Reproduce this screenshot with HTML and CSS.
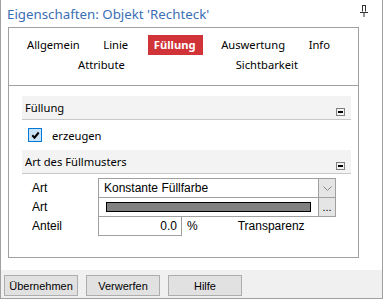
FILE: index.html
```html
<!DOCTYPE html>
<html lang="de">

<head>
  <meta charset="UTF-8">
  <meta name="viewport" content="width=device-width, initial-scale=1.0">
  <title>Eigenschaften</title>
  <link rel="stylesheet" href="styles.css">
</head>

<body>
  <div class="window">
    <div class="titlebar">
      <span class="title">Eigenschaften: Objekt 'Rechteck'</span>
      <svg class="pin" width="8" height="12" viewBox="0 0 8 12">
        <path d="M2 0.5h4M2.5 0.5v6M5.5 0.5v6M0 7.5h8M4 7.5v4.5" stroke="#333" stroke-width="1" fill="none" />
      </svg>
    </div>

    <div class="panel">
      <div class="tabs">
        <div class="tab-row first">
          <span class="tab">Allgemein</span>
          <span class="tab">Linie</span>
          <span class="tab active">Füllung</span>
          <span class="tab">Auswertung</span>
          <span class="tab">Info</span>
        </div>
        <div class="tab-row second">
          <span class="tab">Attribute</span>
          <span class="tab">Sichtbarkeit</span>
        </div>
      </div>

      <div class="content">
        <!-- Füllung -->
        <div class="section-head">
          <span>Füllung</span>
          <span class="collapse"></span>
        </div>
        <div class="check-row">
          <span class="checkbox">
            <svg width="11" height="11" viewBox="0 0 11 11">
              <path d="M2.3 5.3l2.2 2.4 4.2-5.2" stroke="#000" stroke-width="2" fill="none" />
            </svg>
          </span>
          <span>erzeugen</span>
        </div>

        <!-- Art des Füllmusters -->
        <div class="section-head">
          <span>Art des Füllmusters</span>
          <span class="collapse"></span>
        </div>
        <div class="form">
          <div class="form-row">
            <span class="label">Art</span>
            <div class="field select">
              <span class="select-text">Konstante Füllfarbe</span>
              <span class="side-btn arrow">
                <svg width="9" height="5" viewBox="0 0 9 5">
                  <path d="M0.5 0.5l4 4 4-4" stroke="#888" stroke-width="1" fill="none" />
                </svg>
              </span>
            </div>
          </div>
          <div class="form-row">
            <span class="label">Art</span>
            <div class="field color">
              <span class="color-box"><span class="color-bar"></span></span>
              <span class="side-btn">...</span>
            </div>
          </div>
          <div class="form-row">
            <span class="label">Anteil</span>
            <span class="field number">0.0</span>
            <span class="unit">%</span>
            <span class="hint">Transparenz</span>
          </div>
        </div>
      </div>
    </div>

    <div class="buttonbar">
      <button class="btn">Übernehmen</button>
      <button class="btn">Verwerfen</button>
      <button class="btn">Hilfe</button>
    </div>
  </div>
</body>

</html>
```

FILE: styles.css
```css
body {
  margin: 0;
  font-family: "Noto Sans", "Open Sans", sans-serif;
  font-size: 11.2px;
  color: #000;
}

.window {
  width: 381px;
  height: 298px;
  border: 1px solid #a0a0a0;
  border-top: none;
  display: flex;
  flex-direction: column;
  background: #fff;
}

.titlebar {
  height: 27px;
  display: flex;
  align-items: center;
  justify-content: space-between;
  padding: 0 14px 0 6px;
}

.title {
  color: #3b6fb5;
  font-size: 13.3px;
}

.pin {
  margin-top: -6px;
}

.panel {
  width: 349px;
  height: 229px;
  margin-left: 7px;
  border: 1px solid #a0a0a0;
}

.tabs {
  padding: 7px 0 10px;
  border-bottom: 1px solid #a0a0a0;
}

.tab-row {
  display: flex;
  justify-content: space-between;
  height: 20px;
}

.tab-row.first {
  padding: 0 28px 0 18px;
}

.tab-row.second {
  padding: 0 60px 0 69px;
}

.tab {
  line-height: 20px;
}

.tab.active {
  background: #d13438;
  color: #fff;
  font-weight: bold;
  padding: 0 7px 0 6px;
  margin: 0 -5px 0 -4px;
}

.content {
  padding: 10px 7px 0 13px;
}

.section-head {
  height: 23px;
  background: #f3f3f3;
  border-bottom: 1px solid #c8c8c8;
  display: flex;
  align-items: center;
  justify-content: space-between;
  padding: 0 6px 0 3px;
}

.collapse {
  width: 7px;
  height: 6px;
  border: 1px solid #808080;
  align-self: flex-end;
  margin-bottom: 3px;
  background: linear-gradient(#000, #000) center / 5px 2px no-repeat;
}

.check-row {
  height: 30px;
  display: flex;
  align-items: center;
  gap: 10px;
  padding-left: 6px;
}

.checkbox {
  width: 12px;
  height: 12px;
  border: 1px solid #0078d7;
  background: #cce4f7;
  display: flex;
  align-items: center;
  justify-content: center;
}

.form {
  padding: 4px 0 0 10px;
  font-family: "Liberation Sans", Arial, sans-serif;
  font-size: 12px;
}

.form-row {
  display: flex;
  align-items: center;
  height: 20px;
  margin-bottom: -1px;
}

.label {
  width: 66px;
}

.field {
  height: 18px;
  border: 1px solid #a0a0a0;
  display: flex;
  align-items: center;
  background: #fff;
}

.select,
.color {
  width: 236px;
}

.select-text {
  flex: 1;
  padding-left: 5px;
}

.color-box {
  flex: 1;
  display: flex;
  align-items: center;
  padding: 0 7px;
  height: 100%;
}

.color-bar {
  flex: 1;
  height: 8px;
  background: #808080;
  border: 1px solid #000;
}

.side-btn {
  width: 16px;
  height: 100%;
  border-left: 1px solid #a0a0a0;
  background: #e5e5e5;
  display: flex;
  align-items: center;
  justify-content: center;
  font-size: 11px;
}

.number {
  width: 78px;
  justify-content: flex-end;
  padding-right: 4px;
}

.unit {
  margin-left: 5px;
}

.hint {
  margin-left: 40px;
}

.buttonbar {
  margin-top: auto;
  height: 28px;
  background: #f0f0f0;
  display: flex;
  align-items: flex-start;
  gap: 8px;
  padding: 5px 0 0 3px;
  box-sizing: border-box;
}

.btn {
  width: 74px;
  height: 21px;
  border: 1px solid #adadad;
  background: #e1e1e1;
  font-family: "Liberation Sans", Arial, sans-serif;
  font-size: 11px;
  padding: 0;
  color: #000;
}
```
